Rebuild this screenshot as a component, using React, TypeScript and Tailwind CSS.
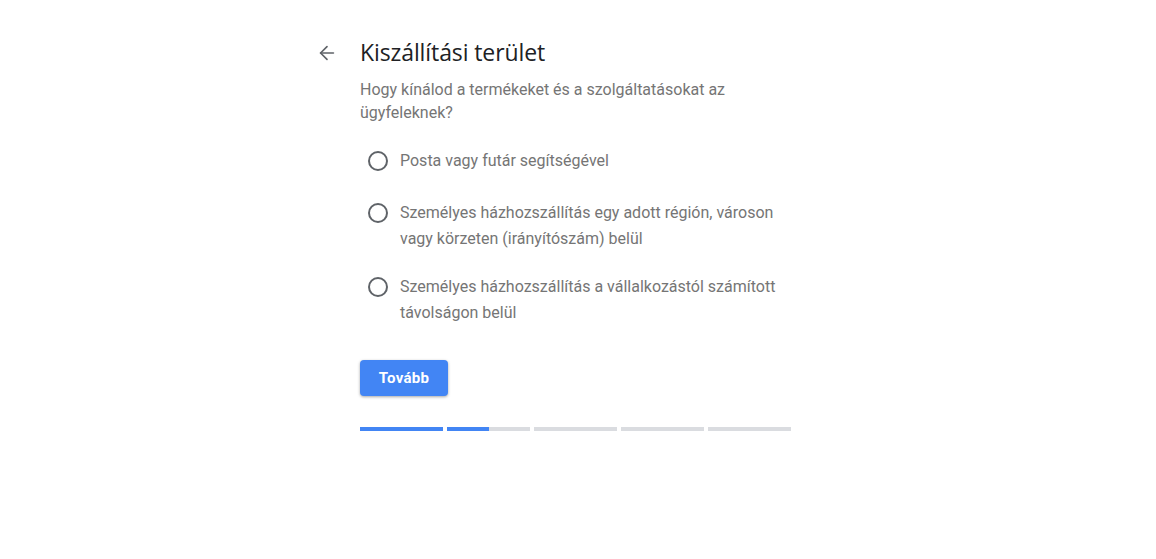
import { ArrowLeft } from 'lucide-react'

const options = [
  'Posta vagy futár segítségével',
  'Személyes házhozszállítás egy adott régión, városon vagy körzeten (irányítószám) belül',
  'Személyes házhozszállítás a vállalkozástól számított távolságon belül',
]

const steps = [100, 50, 0, 0, 0]

export default function App() {
  return (
    <div className="min-h-[559px] w-full bg-white font-['Roboto',sans-serif]">
      <div className="flex pt-[36px] pl-[316px]">
        <div className="w-[44px] pt-[6px]">
          <ArrowLeft className="h-[22px] w-[22px] text-[#5f6368]" strokeWidth={1.8} />
        </div>
        <div className="w-[431px]">
          <h1 className="text-[23px] leading-[32px] text-[#202124] font-['Open_Sans',sans-serif] tracking-[-0.1px]">
            Kiszállítási terület
          </h1>
          <p className="mt-[10px] w-[380px] text-[16px] leading-[23px] text-[#757575]">
            Hogy kínálod a termékeket és a szolgáltatásokat az ügyfeleknek?
          </p>

          <div className="mt-[24px] flex flex-col gap-[22px] pl-[8px]">
            {options.map((label, i) => (
              <label key={label} className={i === 0 ? 'flex min-h-[30px] items-start gap-[12px]' : 'flex items-start gap-[12px]'}>
                <span className="mt-[3px] h-[20px] w-[20px] shrink-0 rounded-full border-2 border-[#5f6368]" />
                <span className="text-[16px] leading-[26px] text-[#757575]">{label}</span>
              </label>
            ))}
          </div>

          <button className="mt-[34px] h-[36px] w-[88px] rounded-[4px] bg-[#4285f4] text-[15px] font-bold tracking-[0.3px] text-white shadow-[0_1px_3px_rgba(0,0,0,0.35)]">
            Tovább
          </button>

          <div className="mt-[31px] flex gap-[4px]">
            {steps.map((value, i) => (
              <div key={i} className="h-[4px] w-[83px] bg-[#dadce0]">
                <div className="h-[4px] bg-[#4285f4]" style={{ width: `${value}%` }} />
              </div>
            ))}
          </div>
        </div>
      </div>
    </div>
  )
}
